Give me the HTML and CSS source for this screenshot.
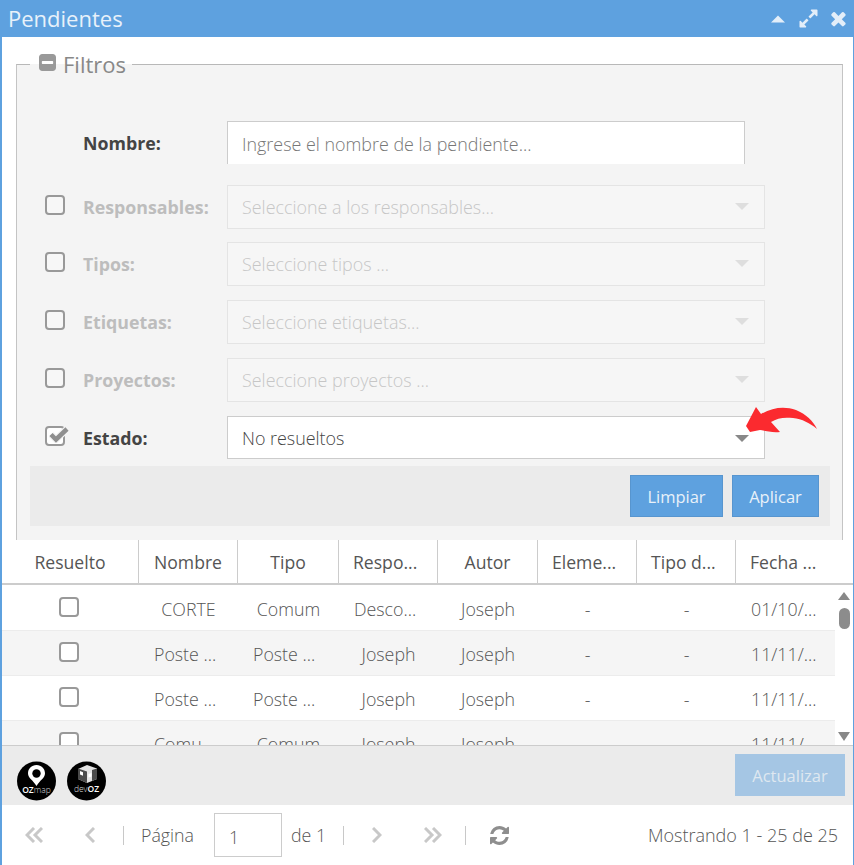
FILE: index.html
```html
<!DOCTYPE html>
<html lang="es">
<head>
<meta charset="utf-8">
<title>Pendientes</title>
<link rel="stylesheet" href="styles.css">
</head>
<body>
<div class="window">
  <header class="titlebar">
    <span class="title">Pendientes</span>
    <div class="win-icons">
      <svg class="ic-up" viewBox="0 0 14 8"><path d="M7 .5 14 7.500H0z"/></svg>
      <svg class="ic-exp" viewBox="0 0 1792 1792"><path d="M883 1056q0 13-10 23l-332 332 144 144q19 19 19 45t-19 45-45 19h-448q-26 0-45-19t-19-45v-448q0-26 19-45t45-19 45 19l144 144 332-332q10-10 23-10t23 10l114 114q10 10 10 23zm781-864v448q0 26-19 45t-45 19-45-19l-144-144-332 332q-10 10-23 10t-23-10l-114-114q-10-10-10-23t10-23l332-332-144-144q-19-19-19-45t19-45 45-19h448q26 0 45 19t19 45z"/></svg>
      <svg class="ic-x" viewBox="200 250 1400 1300"><path d="M1490 1322q0 40-28 68l-136 136q-28 28-68 28t-68-28l-294-294-294 294q-28 28-68 28t-68-28l-136-136q-28-28-28-68t28-68l294-294-294-294q-28-28-28-68t28-68l136-136q28-28 68-28t68 28l294 294 294-294q28-28 68-28t68 28l136 136q28 28 28 68t-28 68l-294 294 294 294q28 28 28 68z"/></svg>
    </div>
  </header>

  <div class="content">
    <fieldset class="filters">
      <legend class="legend">
        <svg class="ic-minus" viewBox="128 128 1536 1536"><path d="M1408 960v-128q0-26-19-45t-45-19h-896q-26 0-45 19t-19 45v128q0 26 19 45t45 19h896q26 0 45-19t19-45zm256-544v960q0 119-84.500 203.500t-203.500 84.500h-960q-119 0-203.500-84.500t-84.500-203.500v-960q0-119 84.500-203.500t203.500-84.500h960q119 0 203.500 84.500t84.500 203.500z"/></svg>
        <span class="legend-text">Filtros</span>
      </legend>

      <div class="row row-first">
        <span class="check-slot"></span>
        <label class="label">Nombre:</label>
        <div class="field field-name">Ingrese el nombre de la pendiente...</div>
      </div>
      <div class="row row-off row-second">
        <span class="check-slot"><span class="box"></span></span>
        <label class="label">Responsables:</label>
        <div class="field field-off">Seleccione a los responsables...<i class="caret"></i></div>
      </div>
      <div class="row row-off">
        <span class="check-slot"><span class="box"></span></span>
        <label class="label">Tipos:</label>
        <div class="field field-off">Seleccione tipos ...<i class="caret"></i></div>
      </div>
      <div class="row row-off">
        <span class="check-slot"><span class="box"></span></span>
        <label class="label">Etiquetas:</label>
        <div class="field field-off">Seleccione etiquetas...<i class="caret"></i></div>
      </div>
      <div class="row row-off">
        <span class="check-slot"><span class="box"></span></span>
        <label class="label">Proyectos:</label>
        <div class="field field-off">Seleccione proyectos ...<i class="caret"></i></div>
      </div>
      <div class="row row-on">
        <span class="check-slot">
          <span class="box"></span>
          <svg class="tick" viewBox="0 0 20 16"><path class="tick-halo" d="M2 7.500l5 5L18 2"/><path class="tick-mark" d="M2 7.500l5 5L18 2"/></svg>
        </span>
        <label class="label">Estado:</label>
        <div class="field field-state">No resueltos<i class="caret caret-dark"></i></div>
      </div>

      <div class="actions">
        <button class="btn btn-clear">Limpiar</button>
        <button class="btn btn-apply">Aplicar</button>
      </div>
    </fieldset>

    <svg class="red-arrow" viewBox="0 0 72 27"><path d="M0 19 10 0l5 7C27 0 39-1 50 3c10 4 17 11 21 19-7-6-15-10-24-11-9-1-16 0-22 4l9 10c-7 1-14-1-20-2L4 25z" fill="#fb2a2f"/></svg>

    <div class="thead">
      <div class="th">Resuelto</div>
      <div class="th">Nombre</div>
      <div class="th">Tipo</div>
      <div class="th trunc">Respo...</div>
      <div class="th">Autor</div>
      <div class="th trunc">Eleme...</div>
      <div class="th trunc">Tipo d...</div>
      <div class="th th-last trunc">Fecha ...</div>
    </div>

    <div class="tbody-wrap">
      <div class="tbody">
        <div class="tr">
          <div class="td"><span class="box"></span></div><div class="td">CORTE</div><div class="td">Comum</div><div class="td trunc">Desco...</div><div class="td">Joseph</div><div class="td">-</div><div class="td">-</div><div class="td trunc">01/10/...</div>
        </div>
        <div class="tr tr-alt">
          <div class="td"><span class="box"></span></div><div class="td trunc">Poste ...</div><div class="td trunc">Poste ...</div><div class="td">Joseph</div><div class="td">Joseph</div><div class="td">-</div><div class="td">-</div><div class="td trunc">11/11/...</div>
        </div>
        <div class="tr">
          <div class="td"><span class="box"></span></div><div class="td trunc">Poste ...</div><div class="td trunc">Poste ...</div><div class="td">Joseph</div><div class="td">Joseph</div><div class="td">-</div><div class="td">-</div><div class="td trunc">11/11/...</div>
        </div>
        <div class="tr tr-alt">
          <div class="td"><span class="box"></span></div><div class="td trunc">Comu...</div><div class="td">Comum</div><div class="td">Joseph</div><div class="td">Joseph</div><div class="td">-</div><div class="td">-</div><div class="td trunc">11/11/...</div>
        </div>
      </div>
      <div class="scrollbar">
        <i class="sb-up"></i>
        <i class="sb-thumb"></i>
        <i class="sb-down"></i>
      </div>
    </div>

    <div class="footbar">
      <svg class="logo" viewBox="0 0 40 40">
        <circle cx="19.500" cy="20" r="19.500" fill="#000"/>
        <path d="M19.500 4c-5 0-8.500 3.800-8.500 8.300 0 5 5 6.700 8.500 12.700 3.500-6 8.500-7.700 8.500-12.700C28 7.800 24.500 4 19.500 4z" fill="#fff"/>
        <circle cx="19.500" cy="12.500" r="4.200" fill="#000"/>
        <text x="19.500" y="32" class="logo-text" text-anchor="middle"><tspan class="logo-b">OZ</tspan>map</text>
      </svg>
      <svg class="logo" viewBox="0 0 40 40">
        <circle cx="19.500" cy="20" r="19.500" fill="#000"/>
        <path d="M20 4l10 3.500v10.500l-10 4-9-4V8z" fill="#e2e2e2"/>
        <path d="M20 10.500V22l-9-4V7.500zM25 9l5-1.500V18l-5 2z" fill="#4a4a4a"/>
        <path d="M13 10l3 1.200v3.500l-3-1.200zM21.500 13l3-1v3.500l-3 1z" fill="#fff"/>
        <text x="19.500" y="30.500" class="logo-text" text-anchor="middle">dev<tspan class="logo-b">OZ</tspan></text>
      </svg>
      <button class="btn btn-update">Actualizar</button>
    </div>

    <div class="pager">
      <svg class="pg pg-first" viewBox="0 0 18 16"><path d="M9 1 2 8l7 7M17 1l-7 7 7 7"/></svg>
      <svg class="pg pg-prev" viewBox="0 0 10 16"><path d="M9 1 2 8l7 7"/></svg>
      <i class="sep"></i>
      <span class="pg-label">Página</span>
      <div class="pg-input">1</div>
      <span class="pg-of">de 1</span>
      <i class="sep"></i>
      <svg class="pg pg-next" viewBox="0 0 10 16"><path d="M1 1l7 7-7 7"/></svg>
      <svg class="pg pg-last" viewBox="0 0 18 16"><path d="M1 1l7 7-7 7M9 1l7 7-7 7"/></svg>
      <i class="sep sep-c"></i>
      <svg class="ic-refresh" viewBox="128 128 1536 1536"><path d="M1639 1056q0 5-1 7-64 268-268 434.500t-478 166.500q-146 0-282.500-55t-243.500-157l-129 129q-19 19-45 19t-45-19-19-45v-448q0-26 19-45t45-19h448q26 0 45 19t19 45-19 45l-137 137q71 66 161 102t187 36q134 0 250-65t186-179q11-17 53-117 8-23 30-23h192q13 0 22.500 9.500t9.500 22.500zm25-800v448q0 26-19 45t-45 19h-448q-26 0-45-19t-19-45 19-45l138-138q-148-137-349-137-134 0-250 65t-186 179q-11 17-53 117-8 23-30 23h-199q-13 0-22.500-9.500t-9.500-22.500v-7q65-268 270-434.500t480-166.500q146 0 284 55.500t245 156.500l130-129q19-19 45-19t45 19 19 45z"/></svg>
      <span class="pg-info">Mostrando 1 - 25 de 25</span>
    </div>
  </div>
</div>
</body>
</html>
```

FILE: styles.css
```css
* { box-sizing: border-box; }
html, body { margin: 0; height: 100%; overflow: hidden; }
body { font-family: "Open Sans", sans-serif; color: #555; background: #fff; }

.window {
  width: 854px;
  height: 865px;
  border-left: 2px solid #5ea1df;
  border-right: 1px solid #5ea1df;
  display: flex;
  flex-direction: column;
}

.titlebar {
  height: 37px;
  margin: 0 -1px 0 -2px;
  padding: 0 7px 0 8px;
  background: #5ea1df;
  display: flex;
  align-items: center;
  justify-content: space-between;
  flex: none;
}
.title { font-size: 22px; color: #e8f1fa; line-height: 37px; }
.win-icons { display: flex; align-items: center; }
.win-icons svg { fill: #e3eef9; display: block; }
.ic-up { width: 14px; height: 8px; margin-right: 13px; }
.ic-exp { width: 21px; height: 21px; margin-right: 11px; }
.ic-x { width: 17px; height: 17px; }

.content { position: relative; flex: 1; display: flex; flex-direction: column; min-height: 0; }

.filters {
  margin: 13px 10px 0 14px;
  padding: 0 12px 14px 13px;
  min-width: 0;
  height: 490px;
  flex: none;
  border: 1px solid #c4c4c4;
  border-top-color: #b8b8b8;
  border-bottom: 0;
  background: #f4f4f4;
}
.legend {
  padding: 0 6px 0 9px;
  height: 28px;
  display: flex;
  align-items: center;
  font-size: 22px;
  color: #888;
  line-height: 28px;
}
.ic-minus { width: 17px; height: 17px; fill: #999; margin-right: 7px; margin-top: -4px; }

.row { display: flex; align-items: center; height: 44px; margin-bottom: 14px; padding-left: 15px; }
.row-first { height: 43px; margin-top: 43px; margin-bottom: 21px; }
.row-second { margin-bottom: 13px; }
.row-on { height: 43px; margin-bottom: 7px; }
.check-slot { position: relative; width: 38px; height: 20px; flex: none; margin-top: -4px; }
.box {
  display: inline-block;
  width: 20px;
  height: 20px;
  border: 2px solid #999;
  border-radius: 4px;
  background: #fff;
  vertical-align: top;
}
.row-off .box { background: #f7f7f7; }
.tick { position: absolute; left: 4px; top: 1px; width: 20px; height: 16px; fill: none; }
.tick-halo { stroke: #f4f4f4; stroke-width: 7; }
.tick-mark { stroke: #8f8f8f; stroke-width: 4.500; }
.label { width: 144px; flex: none; font-size: 17.800px; font-weight: 700; color: #444; margin-top: -1px; }
.row-first .label, .row-on .label { margin-top: 1px; }
.row-off .label { color: #bdbdbd; }
.field {
  position: relative;
  width: 538px;
  height: 100%;
  background: #fff;
  border: 1px solid #ccc;
  padding: 0 14px;
  font-size: 17.900px;
  font-weight: 300;
  line-height: 42px;
  color: #555;
}
.field-name { width: 518px; border-bottom: 0; color: #777; line-height: 44px; }
.field-off { background: #f6f6f6; border-color: #e4e4e4; color: #c6c6c6; }
.field-state { color: #444; }
.caret {
  position: absolute;
  right: 15px;
  top: 17px;
  border-left: 7px solid transparent;
  border-right: 7px solid transparent;
  border-top: 7px solid #dedede;
}
.caret-dark { border-top-color: #888; top: 18px; }

.actions {
  height: 60px;
  background: #ebebeb;
  padding: 9px 11px;
  display: flex;
  justify-content: flex-end;
  gap: 9px;
}
.btn {
  font-family: inherit;
  font-size: 16.500px;
  font-weight: 400;
  height: 42px;
  padding: 0;
  color: #e9f1f9;
  background: #5ea1df;
  border: 1px solid #5795cf;
}
.btn-clear { width: 93px; }
.btn-apply { width: 87px; }

.red-arrow { position: absolute; left: 744px; top: 370px; width: 72px; height: 27px; }

.thead {
  display: grid;
  grid-template-columns: 137px 99px 101px 99px 100px 99px 99px 1fr;
  height: 45px;
  flex: none;
  border-bottom: 2px solid #ccc;
  background: #fff;
}
.th {
  border-right: 1px solid #ccc;
  text-align: center;
  font-size: 17.600px;
  line-height: 45px;
  color: #555;
}
.th.trunc, .td.trunc { text-align: left; padding-left: 14px; }
.td.trunc { padding-left: 15px; }
.th-last { border-right: 0; }

.tbody-wrap { position: relative; height: 160px; flex: none; overflow: hidden; display: flex; }
.tbody { flex: 1; min-width: 0; padding-top: 1px; }
.tr {
  display: grid;
  grid-template-columns: 137px 99px 101px 99px 100px 99px 99px 1fr;
  height: 45px;
  border-bottom: 1px solid #ececec;
}
.tr-alt { background: #f5f5f5; }
.td {
  text-align: center;
  font-size: 17.800px;
  font-weight: 300;
  color: #555;
  line-height: 47px;
  white-space: nowrap;
}
.td .box { margin: 11px 4px 0 0; }
.scrollbar { position: relative; width: 18px; flex: none; background: #fff; }
.sb-up, .sb-down { position: absolute; left: 3px; border-left: 6.500px solid transparent; border-right: 6.500px solid transparent; }
.sb-up { top: 7px; border-bottom: 8px solid #888; }
.sb-down { bottom: 4px; border-top: 9px solid #888; }
.sb-thumb { position: absolute; left: 4px; top: 23px; width: 11px; height: 21px; border-radius: 6px; background: #8c8c8c; }

.footbar {
  height: 60px;
  flex: none;
  background: #ebebeb;
  border-top: 1px solid #ccc;
  padding: 15px 8px 0 15px;
  display: flex;
  align-items: flex-start;
  gap: 10px;
}
.logo { width: 40px; height: 40px; display: block; }
.logo-text { font-family: "Open Sans", sans-serif; font-size: 8.500px; fill: #ddd; font-weight: 300; }
.logo-b { font-weight: 600; fill: #fff; }
.btn-update { margin: -7px 0 0 auto; width: 110px; background: #a5c6e4; border-color: #a5c6e4; color: #dfe8f0; }

.pager {
  height: 60px;
  flex: none;
  display: flex;
  align-items: center;
  padding: 0 15px 0 23px;
  font-size: 17.800px;
  font-weight: 300;
  color: #555;
}
.pg { fill: none; stroke: #c8c8c8; stroke-width: 3; height: 16px; flex: none; }
.pg-first { width: 18px; margin-right: 42px; }
.pg-prev { width: 10px; margin-right: 28px; }
.sep { width: 1px; height: 19px; background: #c8c8c8; flex: none; }
.pg-label { margin-left: 17px; width: 53px; flex: none; }
.pg-input {
  width: 68px;
  height: 44px;
  margin: 0 9px 0 20px;
  padding-left: 14px;
  border: 1px solid #ccc;
  background: #fff;
  line-height: 46px;
  flex: none;
}
.pg-of { width: 52px; flex: none; }
.pg-next { width: 10px; margin-left: 28px; }
.pg-last { width: 18px; margin-left: 42px; }
.sep-c { margin-left: 23px; }
.ic-refresh { width: 19px; height: 19px; fill: #8e8e8e; margin-left: 24px; flex: none; }
.pg-info { margin-left: auto; font-size: 18px; }
```
